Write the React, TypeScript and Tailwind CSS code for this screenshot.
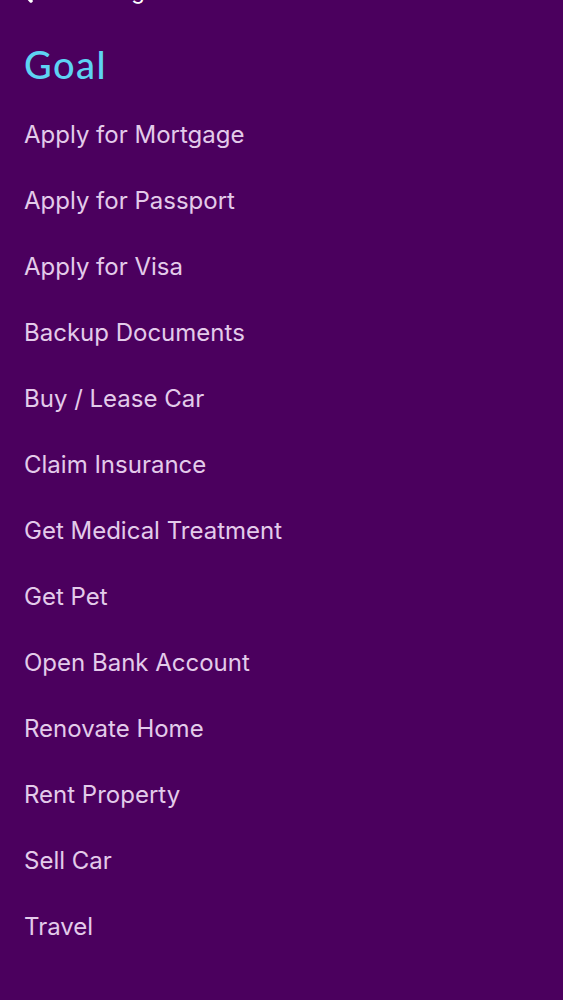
import React from 'react';

const GOALS = [
  'Apply for Mortgage',
  'Apply for Passport',
  'Apply for Visa',
  'Backup Documents',
  'Buy / Lease Car',
  'Claim Insurance',
  'Get Medical Treatment',
  'Get Pet',
  'Open Bank Account',
  'Renovate Home',
  'Rent Property',
  'Sell Car',
  'Travel',
];

const App: React.FC = () => {
  return (
    <div className="min-h-[1000px] w-full bg-[#4b005e] overflow-hidden">
      {/* nav bar, scrolled mostly out of view */}
      <div className="-mt-[22px] flex h-[26px] items-center gap-[38px] pl-[20px] text-white">
        <svg width="14" height="24" viewBox="0 0 14 24" fill="none">
          <path d="M11 2 L2 12 L11 22" stroke="white" strokeWidth="3.5" strokeLinecap="round" strokeLinejoin="round" />
        </svg>
        <span className="text-[22px] leading-none" style={{ fontFamily: 'Inter, sans-serif' }}>Settings</span>
      </div>

      <h1
        className="mt-[38px] pl-[24px] text-[38px] leading-[44px] font-medium tracking-[1.5px] text-[#5ed3f3]"
        style={{ fontFamily: 'Lato, sans-serif' }}
      >
        Goal
      </h1>

      <ul className="mt-[16px] flex flex-col" style={{ fontFamily: 'Inter, "Liberation Sans", sans-serif' }}>
        {GOALS.map((g) => (
          <li key={g} className="flex h-[66px] items-center pl-[24px] text-[24px] text-[#e3cbea]">
            {g}
          </li>
        ))}
      </ul>
    </div>
  );
};

export default App;
